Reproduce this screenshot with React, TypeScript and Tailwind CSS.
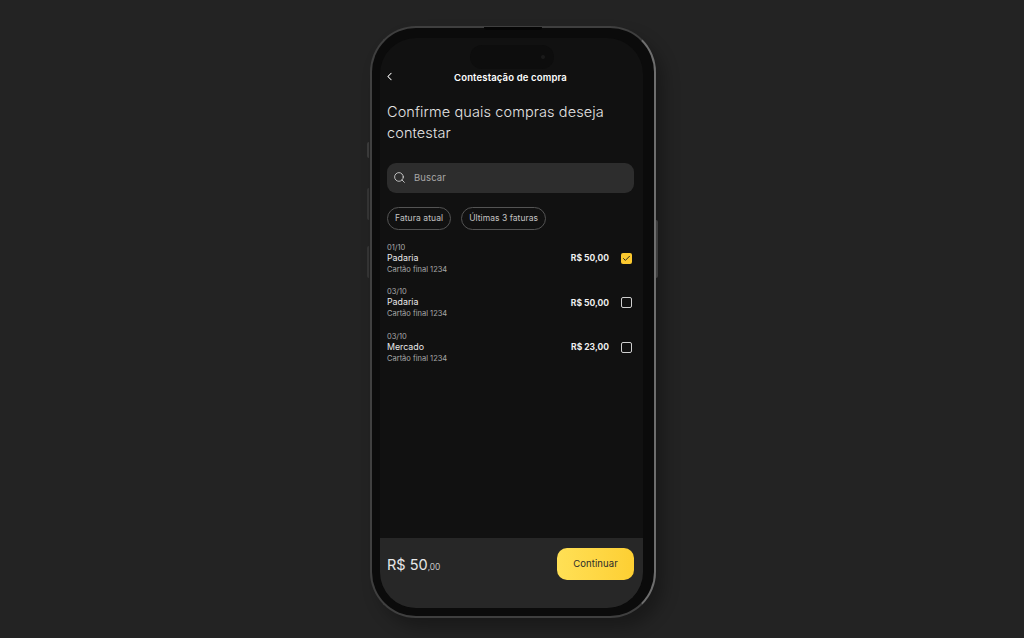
import { ChevronLeft, Search, Check } from "lucide-react";

const purchases = [
    { id: 1, date: "01/10", name: "Padaria", card: "Cartão final 1234", value: "R$ 50,00", checked: true },
    { id: 2, date: "03/10", name: "Padaria", card: "Cartão final 1234", value: "R$ 50,00", checked: false },
    { id: 3, date: "03/10", name: "Mercado", card: "Cartão final 1234", value: "R$ 23,00", checked: false },
];

export default function App() {
    return (
        <div className="h-[638px] w-[1024px] overflow-hidden bg-[#232323] pl-[370px] pt-[26px] font-['Inter',sans-serif]">
            <div className="relative h-[592px] w-[286px] rounded-[46px] border-2 border-[#3f3f3f] border-r-[#6e6e6e] bg-[#0b0b0b] pb-[8px] pl-[8px] pr-[11px] pt-[10px] shadow-[8px_10px_16px_rgba(0,0,0,0.28)]">
                {/* top speaker line and side buttons */}
                <div className="absolute left-[112px] top-[-1px] h-[3px] w-[58px] rounded-b bg-[#050505]" />
                <div className="absolute left-[-5px] top-[114px] h-[16px] w-[2px] rounded-l bg-[#3a3a3a]" />
                <div className="absolute left-[-5px] top-[160px] h-[32px] w-[2px] rounded-l bg-[#333333]" />
                <div className="absolute left-[-5px] top-[218px] h-[32px] w-[2px] rounded-l bg-[#333333]" />
                <div className="absolute right-[-4px] top-[192px] h-[58px] w-[2px] rounded-r bg-[#3d3d3d]" />

                <div className="relative flex h-full flex-col overflow-hidden rounded-[36px] bg-[#111111]">
                    {/* dynamic island */}
                    <div className="absolute left-[90px] top-[7px] flex h-[24px] w-[84px] items-center justify-end rounded-full bg-[#0d0d0d] pr-[9px]">
                        <div className="h-[4px] w-[4px] rounded-full bg-[#1a1a1a]" />
                    </div>

                    <div className="flex flex-1 flex-col px-[7px] pt-[33px]">
                        <div className="relative flex h-[14px] items-center justify-center pr-[2px]">
                            <ChevronLeft size={13} strokeWidth={1.9} className="absolute left-[-4px] top-[-1px] text-white" />
                            <span className="text-[9.5px] font-semibold leading-none tracking-[0.15px] text-white">Contestação de compra</span>
                        </div>

                        <h1 className="mt-[16px] w-[240px] text-[14.5px] font-light leading-[21px] tracking-[0.1px] text-[#e4e4e4]">
                            Confirme quais compras deseja contestar
                        </h1>

                        <div className="mt-[20px] flex h-[30px] w-[247px] items-center gap-[8px] rounded-[9px] bg-[#2d2d2d] pl-[6px]">
                            <Search size={13} strokeWidth={1.5} className="mt-[-2px] text-[#e0e0e0]" />
                            <span className="text-[9.5px] tracking-[0.1px] text-[#a8a8a8]">Buscar</span>
                        </div>

                        <div className="mt-[14px] flex gap-[10px]">
                            <div className="flex h-[23px] items-center rounded-full border border-[#545454] px-[7px] text-[8.5px] tracking-[0.08px] text-[#c4c4c4]">Fatura atual</div>
                            <div className="flex h-[23px] items-center rounded-full border border-[#545454] px-[7px] text-[8.5px] tracking-[0.05px] text-[#c4c4c4]">Últimas 3 faturas</div>
                        </div>

                        <div className="mt-[12px] flex w-[247px] flex-col gap-[11.4px]">
                            {purchases.map((p) => (
                                <div key={p.id} className="flex h-[33px] items-center justify-between">
                                    <div className="flex flex-col leading-[11px]">
                                        <span className="text-[7.5px] text-[#a8a8a8]">{p.date}</span>
                                        <span className="mb-[1px] text-[8.8px] leading-[10px] text-[#e8e8e8]">{p.name}</span>
                                        <span className="text-[7.5px] text-[#a8a8a8]">{p.card}</span>
                                    </div>
                                    <div className="flex items-center gap-[12px] pr-[2px]">
                                        <span className="text-[8.5px] font-bold text-[#efefef]">{p.value}</span>
                                        {p.checked ? (
                                            <div className="flex h-[11px] w-[11px] items-center justify-center rounded-[2px] bg-[#fcc92f]">
                                                <Check size={9} strokeWidth={2.4} className="text-[#1a1a1a]" />
                                            </div>
                                        ) : (
                                            <div className="h-[11px] w-[11px] rounded-[2px] border border-[#cfcfcf]" />
                                        )}
                                    </div>
                                </div>
                            ))}
                        </div>
                    </div>

                    <div className="flex h-[70px] items-start justify-between bg-[#272727] pl-[7px] pr-[9px] pt-[10px]">
                        <div className="mt-[6px] flex items-baseline text-[#e8e8e8]">
                            <span className="text-[14.5px] font-normal">R$ 50</span>
                            <span className="text-[8.5px] font-light">,00</span>
                        </div>
                        <button className="flex h-[32px] w-[77px] items-center justify-center rounded-[10px] bg-gradient-to-r from-[#ffe055] to-[#fdcf32] text-[9.5px] font-normal tracking-[0.1px] text-[#2b2b2b]">
                            Continuar
                        </button>
                    </div>
                </div>
            </div>
        </div>
    );
}
